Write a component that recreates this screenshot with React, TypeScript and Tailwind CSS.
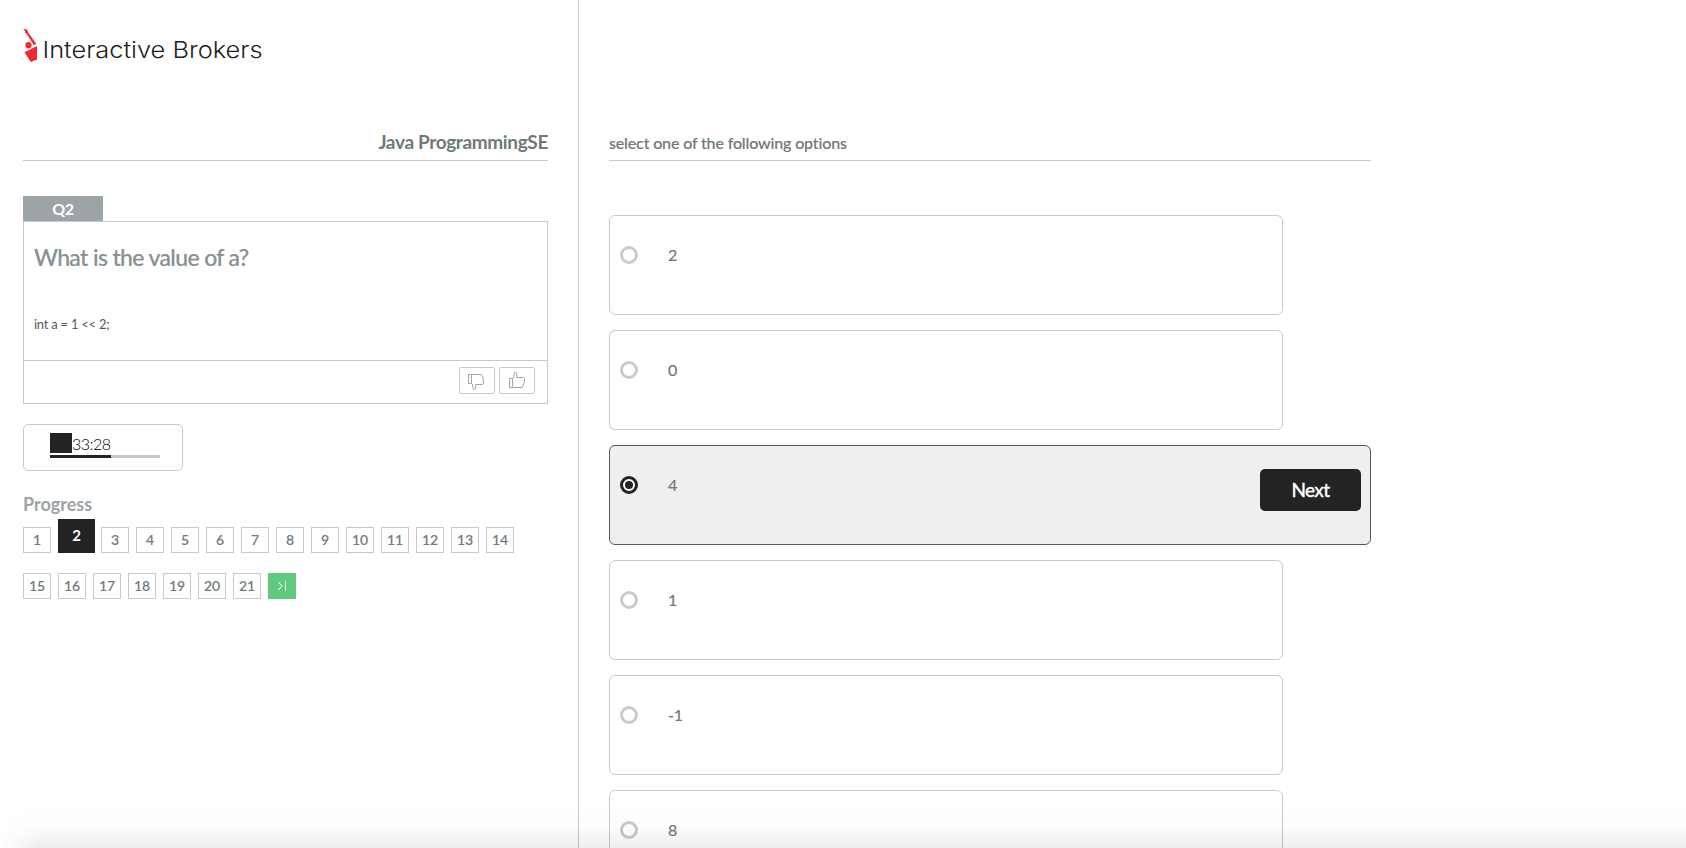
const options = ["2", "0", "4", "1", "-1", "8"];
const SELECTED = 2;

function Logo() {
  return (
    <div className="flex h-[34px] items-start">
      <svg width="16" height="34" viewBox="0 0 16 34" className="mr-[4px] shrink-0">
        <path d="M0.2 0 H2.6 L4.6 1.2 L4.8 3 L13.2 14.8 L10.9 16.2 L3.4 4.6 L1.8 3.4 L2 1.8 Z" fill="#ee2a2e" />
        <circle cx="5.5" cy="16.2" r="3.1" fill="#ee2a2e" />
        <path d="M1.4 23.2 L14 17 L14 30.4 L7.8 33 Z" fill="#ee2a2e" />
      </svg>
      <svg width="230" height="40" viewBox="0 0 230 40" className="shrink-0">
        <text x="-0.5" y="29.3" textLength="220" lengthAdjust="spacingAndGlyphs" fontSize="22.8" fill="#231f20" className="font-['Inter'] font-light">
          Interactive Brokers
        </text>
      </svg>
    </div>
  );
}

function Thumb({ down = false }: { down?: boolean }) {
  return (
    <button className="flex h-[27px] w-9 items-center justify-center rounded-[2px] border border-[#c8c9cb]">
      <svg width="18" height="19" viewBox="0 0 18 19" fill="none" stroke="#a4a4a4" strokeWidth="1" strokeLinejoin="round">
        {down ? (
          <path d="M3.5 3.5 H0.5 V12.5 H3.5 M3.5 3.5 V12.5 L4.8 14 V17 L5.5 18.3 H7 L7.7 17 V13.5 H14.5 L15.6 12.3 L15 7 L13.3 3.5 H3.5" />
        ) : (
          <path d="M4.5 7.5 H1.5 V16.5 H4.5 M4.5 16.5 V7.5 L6 5.8 V2.2 L6.8 1.2 H8 L8.7 2.2 V6.5 H15.5 L16.6 7.5 L16 12 L14.3 16.5 H4.5" />
        )}
      </svg>
    </button>
  );
}

function PageBox({ n }: { n: number }) {
  if (n === 2) {
    return (
      <div className="-mr-px h-[34px] w-[37px] bg-[#232323] text-center text-[15px] leading-[33px] font-bold text-white">2</div>
    );
  }
  return (
    <div className="h-[26px] w-7 border border-[#c8c9cb] text-center text-sm leading-[24px] font-medium text-[#717a7c] [-webkit-text-stroke:0.15px_#717a7c]">
      {n}
    </div>
  );
}

export default function App() {
  const firstRow = Array.from({ length: 14 }, (_, i) => i + 1);
  const secondRow = Array.from({ length: 7 }, (_, i) => i + 15);
  return (
    <div className="relative flex h-[848px] overflow-hidden bg-white font-['Lato',sans-serif] text-[#6f797b]">
      <aside className="flex w-[579px] shrink-0 flex-col border-r border-[#c8c9cb] pt-[29px] pr-[30px] pl-[23px]">
        <Logo />
        <div className="mt-[63px] flex h-[35px] items-end justify-end border-b border-[#c8c9cb] pb-[5px]">
          <h1 className="text-[19px] leading-[27px] font-bold tracking-[-0.35px]">Java ProgrammingSE</h1>
        </div>
        <div className="mt-[35px] h-[25px] w-20 bg-[#9ca4a7] text-center text-[16px] leading-[25px] font-bold tracking-[-0.3px] text-white">Q2</div>
        <section className="flex h-[183px] flex-col border border-[#c8c9cb]">
          <div className="h-[138px] px-[10px] pt-[19px]">
            <h2 className="text-[23px] leading-[32px] font-medium tracking-[-0.64px] text-[#879194] [-webkit-text-stroke:0.2px_#879194]">
              What is the value of a?
            </h2>
            <p className="mt-[41px] text-[13px] leading-5 tracking-[-0.25px] text-[#55595b]">int a = 1 &lt;&lt; 2;</p>
          </div>
          <div className="flex h-[43px] justify-end gap-1 border-t border-[#c8c9cb] pt-[6px] pr-3">
            <Thumb down />
            <Thumb />
          </div>
        </section>
        <div className="mt-5 h-[47px] w-40 rounded-[5px] border border-[#c8c9cb] pt-2 pl-[26px]">
          <div className="flex h-5">
            <div className="h-5 w-[22px] bg-[#232323]" />
            <span className="text-[16px] leading-[21px] font-light tracking-[-0.5px] text-black">33:28</span>
          </div>
          <div className="mt-[2px] h-[3px] w-[110px] bg-[#c8c9cb]">
            <div className="h-full w-[61px] bg-[#232323]" />
          </div>
        </div>
        <h3 className="mt-[19px] h-[29px] text-lg leading-[28px] font-bold text-[#9ca4a7]">Progress</h3>
        <div className="flex h-[34px] items-end gap-[7px]">
          {firstRow.map((n) => (
            <PageBox key={n} n={n} />
          ))}
        </div>
        <div className="mt-5 flex gap-[7px]">
          {secondRow.map((n) => (
            <PageBox key={n} n={n} />
          ))}
          <div className="flex h-[26px] w-7 items-center justify-center bg-[#60cb7f]">
            <svg width="10" height="10" viewBox="0 0 10 10" fill="none" stroke="white">
              <path d="M1 1 L5.3 5 L1 9 M8.5 0.5 V9.5" />
            </svg>
          </div>
        </div>
      </aside>
      <main className="ml-[30px] w-[762px] pt-[126px]">
        <div className="h-[35px] border-b border-[#c8c9cb] text-[16px] leading-[33px] font-medium tracking-[-0.15px] [-webkit-text-stroke:0.15px_#6f797b]">
          select one of the following options
        </div>
        <div className="mt-[54px] flex flex-col gap-[15px]">
          {options.map((value, i) => {
            const on = i === SELECTED;
            return (
              <label
                key={value}
                className={`flex h-[100px] shrink-0 items-start rounded-md border pl-[10px] ${
                  on ? "w-[762px] border-[#58595b] bg-[#efefef]" : "w-[674px] border-[#c8c9cb]"
                }`}
              >
                <span
                  className={`mt-[30px] flex size-[18px] items-center justify-center rounded-full border-[3px] bg-white ${
                    on ? "border-[#232323]" : "border-[#c8cbcd]"
                  }`}
                >
                  {on && <span className="size-2 rounded-full bg-[#232323]" />}
                </span>
                <span className="mt-[27px] ml-[30px] text-[16px] leading-6 tracking-[-0.15px] [-webkit-text-stroke:0.2px_#6f797b]">{value}</span>
                {on && (
                  <button className="mt-[23px] mr-[9px] ml-auto h-[42px] w-[101px] rounded-[5px] bg-[#232323] pt-px text-[19px] font-medium tracking-[-0.6px] text-white [-webkit-text-stroke:0.3px_white]">
                    Next
                  </button>
                )}
              </label>
            );
          })}
        </div>
      </main>
      <div className="pointer-events-none absolute inset-x-0 bottom-0 h-10 bg-linear-to-b from-black/0 via-black/[0.015] to-black/[0.07] [mask-image:linear-gradient(to_right,transparent_0,black_40px)]" />
    </div>
  );
}
